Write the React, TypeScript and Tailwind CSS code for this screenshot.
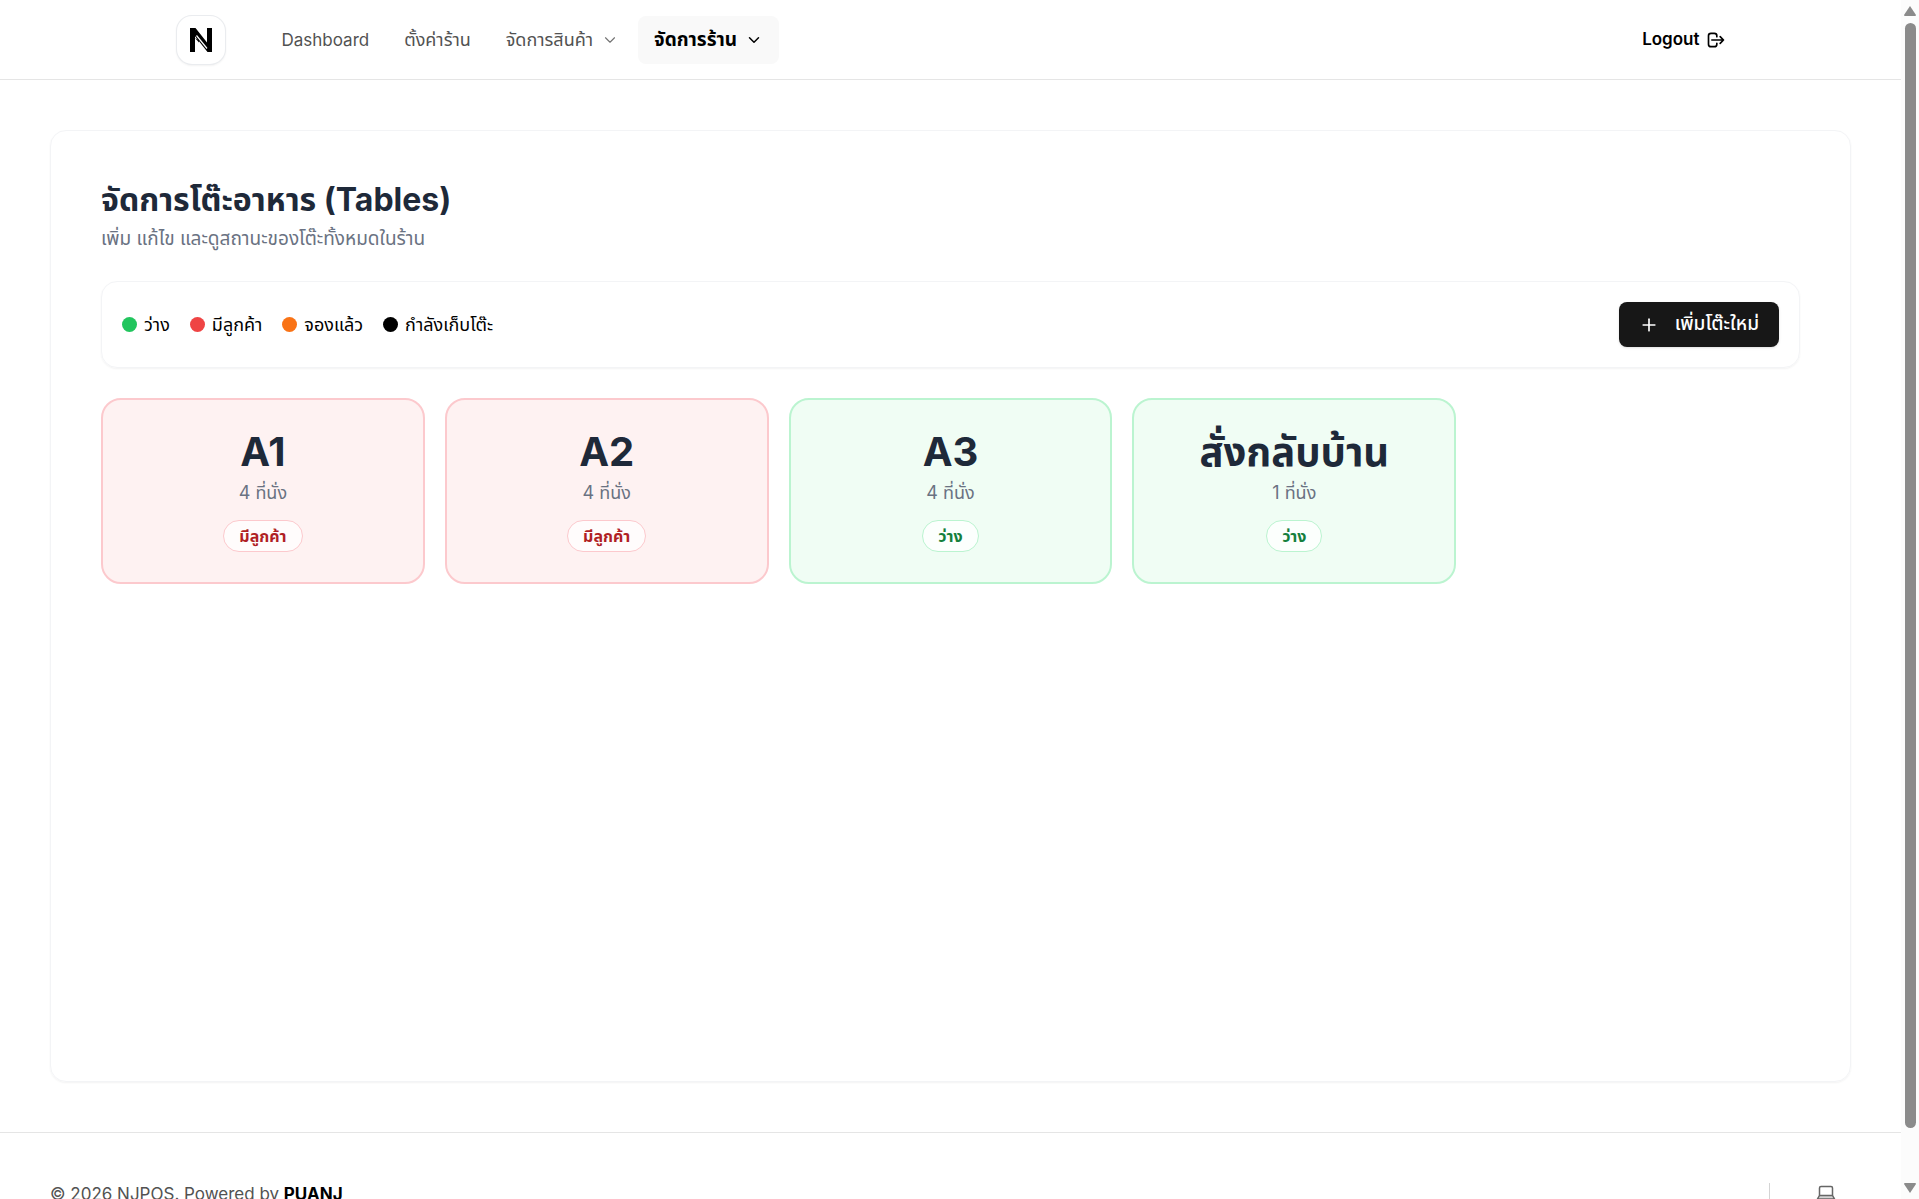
import { ChevronDown, Plus } from "lucide-react";
import { HiOutlineLogout } from "react-icons/hi";

type Status = "busy" | "free";

const statusStyles: Record<Status, { label: string; card: string; badge: string }> = {
  busy: {
    label: "มีลูกค้า",
    card: "border-[#fcc9cd] bg-[#fef2f2]",
    badge: "border-[#fcc9cd] text-[#b01f24]",
  },
  free: {
    label: "ว่าง",
    card: "border-[#bbf4d0] bg-[#f0fdf4]",
    badge: "border-[#bbf4d0] text-[#15803d]",
  },
};

const tables: { name: string; seats: number; status: Status }[] = [
  { name: "A1", seats: 4, status: "busy" },
  { name: "A2", seats: 4, status: "busy" },
  { name: "A3", seats: 4, status: "free" },
  { name: "สั่งกลับบ้าน", seats: 1, status: "free" },
];

const legend = [
  { label: "ว่าง", color: "bg-[#22c55e]" },
  { label: "มีลูกค้า", color: "bg-[#ef4444]" },
  { label: "จองแล้ว", color: "bg-[#f97316]" },
  { label: "กำลังเก็บโต๊ะ", color: "bg-black" },
];

function Logo() {
  return (
    <a
      href="#"
      aria-label="NJPOS"
      className="flex size-[50px] items-center justify-center rounded-2xl border border-gray-200/80 bg-white shadow-xs"
    >
      <svg width="22" height="24" viewBox="0 0 22 24" fill="black">
        <path d="M0 0h5.5L17 14.5V0h5v24h-4.5L5 8.2V24H0z" />
        <path d="M6.5 7.5L17 20.5" stroke="white" strokeWidth="1.2" />
        <path d="M5 10l4 4.5V12z" />
      </svg>
    </a>
  );
}

function Header() {
  return (
    <header className="border-b border-neutral-200">
      <div className="mx-auto flex h-[79px] max-w-[1600px] items-center px-[25px]">
        <Logo />
        <nav className="ml-10 flex items-center gap-[3px] text-lg leading-6 text-neutral-600">
          <a href="#" className="px-4 py-3 text-[17px]">Dashboard</a>
          <a href="#" className="px-4 py-3">ตั้งค่าร้าน</a>
          <button className="flex items-center gap-2 px-4 py-3">
            จัดการสินค้า
            <ChevronDown size={18} strokeWidth={1.5} className="text-neutral-500" />
          </button>
          <button className="flex items-center gap-2 rounded-lg bg-[#f9f9f9] px-4 py-3 text-[19px] font-bold text-black">
            จัดการร้าน
            <ChevronDown size={18} />
          </button>
        </nav>
        <button className="ml-auto flex items-center gap-[6px] text-[17px] font-semibold text-black">
          Logout
          <HiOutlineLogout size={20} />
        </button>
      </div>
    </header>
  );
}

function TableCard({ name, seats, status }: { name: string; seats: number; status: Status }) {
  const style = statusStyles[status];
  return (
    <button className={`flex h-[186px] flex-col items-center rounded-[20px] border-2 pt-7 ${style.card}`}>
      <span className="text-[40px] leading-[48px] font-bold text-gray-800">{name}</span>
      <span className="mt-[5px] text-lg leading-6 text-gray-500">{seats} ที่นั่ง</span>
      <span className={`mt-[15px] rounded-full border bg-white/80 px-[15px] text-base leading-[30px] font-bold ${style.badge}`}>
        {style.label}
      </span>
    </button>
  );
}

function LaptopIcon() {
  return (
    <svg width="20" height="20" viewBox="0 0 20 20" fill="none">
      <path d="M2.500 12.500h15L19 16H1z" fill="#d4d4d4" />
      <path
        d="M3.500 12.500V5A1.500 1.500 0 0 1 5 3.500h10A1.500 1.500 0 0 1 16.500 5v7.500M3.500 12.500h13M3.500 12.500L1.500 16h17l-2-3.500"
        stroke="#666"
        strokeWidth="1.5"
      />
    </svg>
  );
}

function Scrollbar() {
  return (
    <div className="flex w-[18px] shrink-0 flex-col items-center bg-[#fcfcfc] py-[6px]" aria-hidden="true">
      <svg width="12" height="10" viewBox="0 0 12 10" fill="#8b8b8b">
        <path d="M6 0l6 9a1 1 0 0 1-1 1H1a1 1 0 0 1-1-1z" />
      </svg>
      <div className="mt-[7px] mb-[55px] w-[11px] flex-1 rounded-full bg-[#8b8b8b]" />
      <svg width="12" height="10" viewBox="0 0 12 10" fill="#8b8b8b">
        <path d="M6 10L0 1a1 1 0 0 1 1-1h10a1 1 0 0 1 1 1z" />
      </svg>
    </div>
  );
}

export default function App() {
  return (
    <div className="flex h-screen overflow-hidden bg-white font-[Inter,'Noto_Sans_Thai','Noto_Sans',sans-serif]">
      <div className="min-w-0 flex-1">
        <Header />
        <main className="p-[50px]">
          <section className="min-h-[calc(100vh-247px)] rounded-2xl border border-gray-100 p-[50px] shadow-xs">
            <h1 className="text-[32px] leading-[38px] font-bold text-gray-800">จัดการโต๊ะอาหาร (Tables)</h1>
            <p className="mt-2 text-[19px] leading-6 text-gray-500">เพิ่ม แก้ไข และดูสถานะของโต๊ะทั้งหมดในร้าน</p>
            <div className="mt-[30px] flex items-center justify-between rounded-2xl border border-gray-100 p-5 shadow-xs">
              <ul className="flex gap-5 text-lg">
                {legend.map((item) => (
                  <li key={item.label} className="flex items-center gap-[7px]">
                    <span className={`size-[15px] rounded-full ${item.color}`} />
                    {item.label}
                  </li>
                ))}
              </ul>
              <button className="flex h-[45px] items-center gap-4 rounded-lg bg-[#171717] px-5 text-[19px] font-medium text-white shadow-sm">
                <Plus size={20} />
                เพิ่มโต๊ะใหม่
              </button>
            </div>
            <div className="mt-[30px] grid grid-cols-5 gap-5">
              {tables.map((table) => (
                <TableCard key={table.name} {...table} />
              ))}
            </div>
          </section>
        </main>
        <footer className="flex items-start justify-between border-t border-neutral-200 px-[50px] pt-[50px] text-[17px] leading-[22px] text-neutral-600">
          <p>
            © 2026 NJPOS. Powered by <strong className="text-black">PUANJ</strong>
          </p>
          <button aria-label="Theme" className="flex h-10 border-l border-neutral-300 pr-[15px] pl-[46px]">
            <LaptopIcon />
          </button>
        </footer>
      </div>
      <Scrollbar />
    </div>
  );
}
